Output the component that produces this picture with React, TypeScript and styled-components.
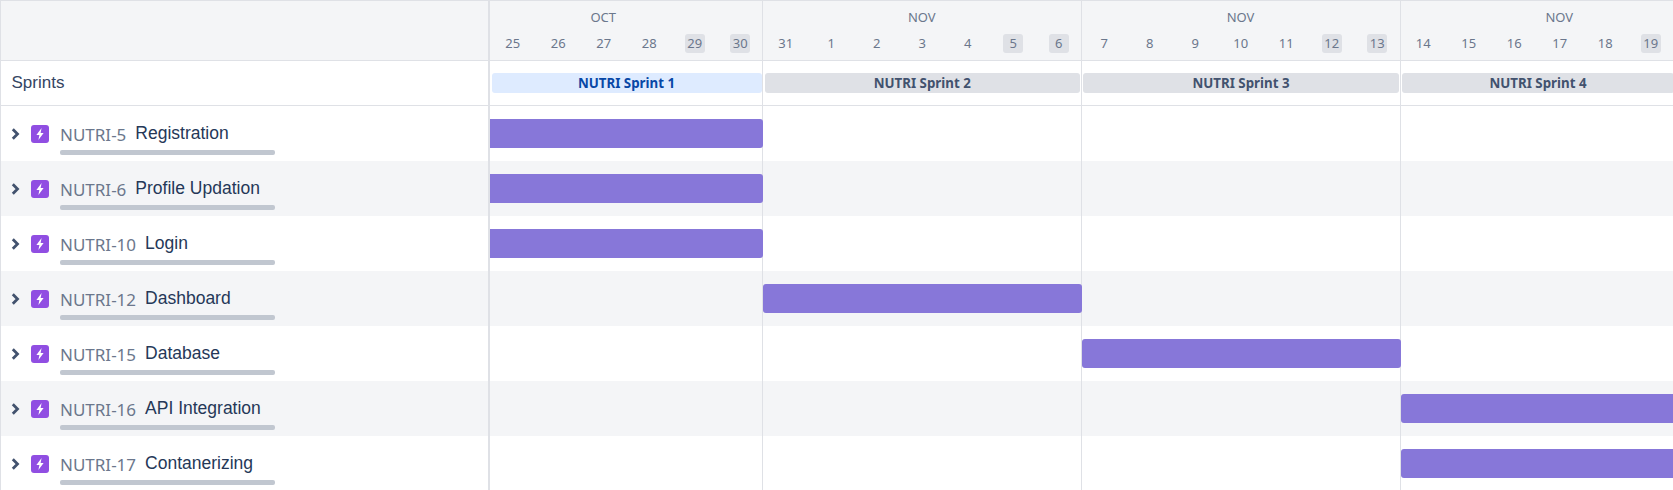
import React from "react";
import styled, { createGlobalStyle } from "styled-components";

const GlobalStyle = createGlobalStyle`
  html, body {
    margin: 0;
    padding: 0;
    background: #fff;
    overflow: hidden;
  }
  * {
    box-sizing: border-box;
  }
`;

const Board = styled.div`
  display: flex;
  flex-direction: column;
  width: 1673px;
  height: 490px;
  overflow: hidden;
  border-top: 1px solid #dfe1e6;
  border-left: 1px solid #dfe1e6;
  font-family: "Liberation Sans", Arial, sans-serif;
`;
const Row = styled.div<{ $height: number; $shaded?: boolean; $line?: boolean }>`
  display: flex;
  flex-shrink: 0;
  height: ${(p) => p.$height}px;
  background: ${(p) => (p.$shaded ? "#f4f5f7" : "#fff")};
  border-bottom: ${(p) => (p.$line ? "1px solid #dfe1e6" : "none")};
`;
const LeftCell = styled.div`
  flex-shrink: 0;
  width: 489px;
  border-right: 2px solid #dfe1e6;
`;
const SprintsLabel = styled(LeftCell)`
  display: flex;
  align-items: center;
  padding-left: 10.5px;
  padding-bottom: 1px;
  font-size: 17px;
  color: #344563;
`;
const IssueCell = styled(LeftCell)`
  display: flex;
  align-items: flex-start;
  padding: 19px 0 0 10px;
`;
const Chevron = styled.svg`
  flex-shrink: 0;
  width: 9px;
  height: 12px;
  margin-top: 3px;
  color: #42526e;
`;
const TypeIcon = styled.svg`
  flex-shrink: 0;
  width: 18px;
  height: 18px;
  margin-left: 11px;
`;
const IssueBody = styled.div`
  display: flex;
  flex-direction: column;
  width: 215px;
  margin-left: 11px;
`;
const IssueTitle = styled.div`
  display: flex;
  align-items: flex-start;
  gap: 9px;
  height: 25px;
  white-space: nowrap;
`;
const IssueKey = styled.span`
  margin-top: -1px;
  font-family: "Noto Sans", sans-serif;
  font-size: 17px;
  line-height: 22px;
  color: #6b778c;
`;
const IssueName = styled.span`
  margin-top: -2px;
  font-size: 17.5px;
  line-height: 20px;
  color: #253858;
`;
const Progress = styled.div`
  width: 215px;
  height: 5px;
  border-radius: 2px;
  background: #c1c7d0;
`;

const TimelineCell = styled.div<{ $width: number }>`
  flex-shrink: 0;
  width: ${(p) => p.$width}px;
  border-right: 1px solid #dfe1e6;
`;
const MonthCell = styled(TimelineCell)`
  display: flex;
  flex-direction: column;
  font-family: "Noto Sans", sans-serif;
  color: #6b778c;
`;
const MonthLabel = styled.div<{ $short?: boolean }>`
  height: 33px;
  padding: 7px ${(p) => (p.$short ? "45.5px" : "0")} 0 0;
  font-size: 13px;
  line-height: 18px;
  text-align: center;
`;
const Days = styled.div`
  display: flex;
`;
const DaySlot = styled.div`
  display: flex;
  justify-content: center;
  width: 45.5px;
  flex-shrink: 0;
`;
const Day = styled.span<{ $weekend?: boolean }>`
  width: 20px;
  height: 19px;
  border-radius: 3px;
  font-size: 13px;
  line-height: 19px;
  text-align: center;
  background: ${(p) => (p.$weekend ? "#dfe1e6" : "transparent")};
`;
const ChipCell = styled(TimelineCell)`
  padding: 12px 0.5px 0 1.5px;
`;
const Chip = styled.div<{ $active?: boolean; $width?: number }>`
  width: ${(p) => (p.$width ? `${p.$width}px` : "100%")};
  height: 20px;
  border-radius: 3px;
  font-family: "Noto Sans", sans-serif;
  font-size: 13.3px;
  font-weight: 700;
  line-height: 20px;
  text-align: center;
  color: ${(p) => (p.$active ? "#0747a6" : "#42526e")};
  background: ${(p) => (p.$active ? "#deebff" : "#dfe1e6")};
`;
const BarCell = styled(TimelineCell)`
  padding-top: 13px;
`;
const Bar = styled.div<{ $first?: boolean }>`
  height: 29px;
  margin-right: -1px;
  border-radius: ${(p) => (p.$first ? "0 3px 3px 0" : "3px")};
  background: #8777d9;
`;

type Sprint = {
  name: string;
  month: string;
  days: number[];
  width: number;
  active?: boolean;
};

const sprints: Sprint[] = [
  { name: "NUTRI Sprint 1", month: "OCT", days: [25, 26, 27, 28, 29, 30], width: 273, active: true },
  { name: "NUTRI Sprint 2", month: "NOV", days: [31, 1, 2, 3, 4, 5, 6], width: 318.5 },
  { name: "NUTRI Sprint 3", month: "NOV", days: [7, 8, 9, 10, 11, 12, 13], width: 319 },
  { name: "NUTRI Sprint 4", month: "NOV", days: [14, 15, 16, 17, 18, 19], width: 318.5 },
];

const issues = [
  { key: "NUTRI-5", name: "Registration", sprint: 0 },
  { key: "NUTRI-6", name: "Profile Updation", sprint: 0 },
  { key: "NUTRI-10", name: "Login", sprint: 0 },
  { key: "NUTRI-12", name: "Dashboard", sprint: 1 },
  { key: "NUTRI-15", name: "Database", sprint: 2 },
  { key: "NUTRI-16", name: "API Integration", sprint: 3 },
  { key: "NUTRI-17", name: "Contanerizing", sprint: 3 },
];

// the first sprint is a day short, so its weekend comes one slot earlier
const isWeekend = (sprintIndex: number, dayIndex: number) =>
  dayIndex >= (sprintIndex === 0 ? 4 : 5);

const App = () => {
  return (
    <Board>
      <GlobalStyle />
      <Row $height={60} $shaded $line>
        <LeftCell />
        {sprints.map((sprint, i) => (
          <MonthCell key={sprint.name} $width={sprint.width}>
            <MonthLabel $short={i === 0}>{sprint.month}</MonthLabel>
            <Days>
              {sprint.days.map((day, d) => (
                <DaySlot key={day}>
                  <Day $weekend={isWeekend(i, d)}>{day}</Day>
                </DaySlot>
              ))}
            </Days>
          </MonthCell>
        ))}
      </Row>
      <Row $height={45} $line>
        <SprintsLabel>Sprints</SprintsLabel>
        {sprints.map((sprint, i) => (
          <ChipCell key={sprint.name} $width={sprint.width}>
            <Chip $active={sprint.active} $width={i === 3 ? 272 : undefined}>
              {sprint.name}
            </Chip>
          </ChipCell>
        ))}
      </Row>
      {issues.map((issue, i) => (
        <Row key={issue.key} $height={55} $shaded={i % 2 === 1}>
          <IssueCell>
            <Chevron viewBox="0 0 9 12" fill="none">
              <path d="M1.8 1.3 L6.5 6 L1.8 10.7" stroke="currentColor" strokeWidth="2.8" />
            </Chevron>
            <TypeIcon viewBox="0 0 18 18">
              <rect width="18" height="18" rx="3" fill="#904ee2" />
              <path d="M10.6 3 L5.4 10 H8.4 L7.4 15 L12.6 8 H9.6 Z" fill="#fff" />
            </TypeIcon>
            <IssueBody>
              <IssueTitle>
                <IssueKey>{issue.key}</IssueKey>
                <IssueName>{issue.name}</IssueName>
              </IssueTitle>
              <Progress />
            </IssueBody>
          </IssueCell>
          {sprints.map((sprint, s) => (
            <BarCell key={sprint.name} $width={sprint.width}>
              {s === issue.sprint && <Bar $first={s === 0} />}
            </BarCell>
          ))}
        </Row>
      ))}
    </Board>
  );
};

export default App;
